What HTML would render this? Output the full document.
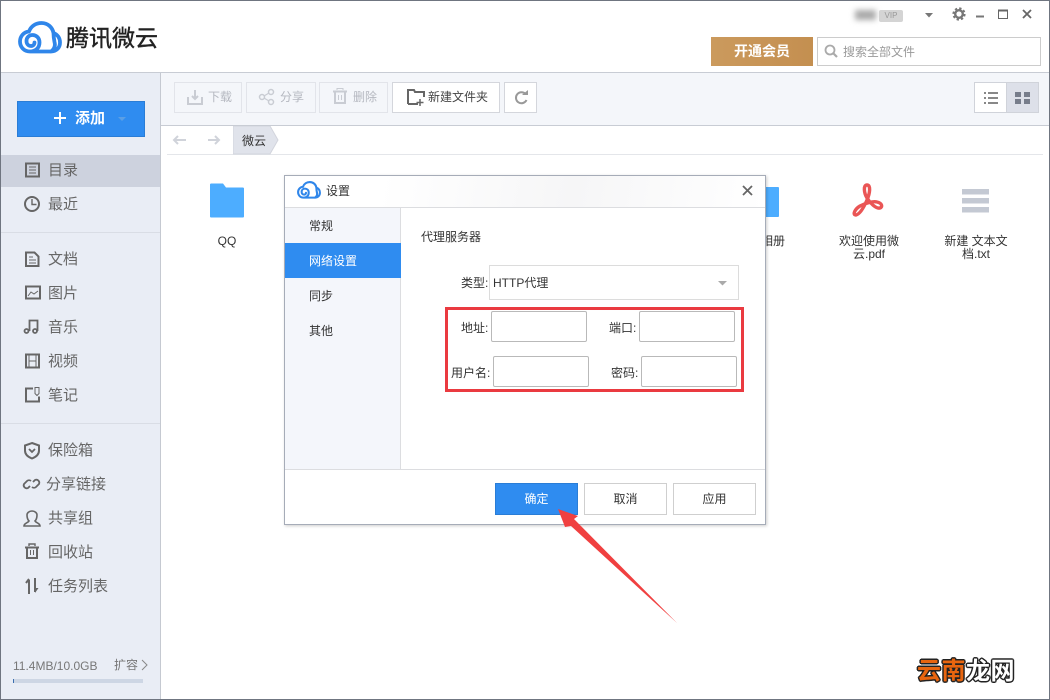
<!DOCTYPE html>
<html lang="zh">
<head>
<meta charset="utf-8">
<title>腾讯微云</title>
<style>
*{box-sizing:border-box;margin:0;padding:0}
html,body{width:1050px;height:700px;overflow:hidden;background:#fff}
body{position:relative;font-family:"Liberation Sans","Noto Sans CJK SC",sans-serif;color:#333}
.a{position:absolute}
.t{position:absolute;white-space:nowrap;line-height:20px;height:20px}
.side{font-size:15px;color:#666}
.tb{position:absolute;top:82px;height:31px;border:1px solid #e2e4ea;background:#f4f6fa}
.tt{font-size:12px;color:#b5b8c0}
.inp{position:absolute;width:96px;height:31px;border:1px solid #b9b9b9;border-radius:2px;background:#fff}
.lab{font-size:12px;color:#333}
.fn{position:absolute;font-size:12px;line-height:13px;color:#333;text-align:center}
.btn{position:absolute;top:483px;width:83px;height:32px;border:1px solid #cfcfcf;background:#fff;font-size:12px;line-height:31px;text-align:center;color:#333}
</style>
</head>
<body>
<!-- header -->
<div class="a" style="left:0;top:72px;width:1050px;height:1px;background:#c8ccd4"></div>
<div class="t" style="left:66px;top:24px;font-size:23px;line-height:28px;height:28px;color:#222;-webkit-text-stroke:.4px #222">腾讯微云</div>

<div class="a" style="left:855px;top:10px;width:21px;height:10px;background:#aaa;filter:blur(3px)"></div>
<div class="t" style="left:879px;top:10px;width:24px;height:12px;line-height:12px;background:#d4d4d4;border-radius:2px;color:#999;font-size:8px;text-align:center">VIP</div>

<div class="a" style="left:711px;top:37px;width:102px;height:29px;background:linear-gradient(90deg,#cb9a5d,#c48f50);color:#fff;font-size:14px;font-weight:bold;line-height:29px;text-align:center">开通会员</div>
<div class="a" style="left:817px;top:37px;width:224px;height:29px;border:1px solid #ccc;background:#fff"></div>
<div class="t" style="left:843px;top:42px;font-size:12px;color:#999">搜索全部文件</div>

<!-- sidebar -->
<div class="a" style="left:1px;top:73px;width:160px;height:626px;background:#e9edf5;border-right:1px solid #c5c9d1"></div>
<div class="a" style="left:1px;top:155px;width:159px;height:32px;background:#cdd2de"></div>
<div class="a" style="left:1px;top:232px;width:159px;height:1px;background:#d9dde5"></div>
<div class="a" style="left:1px;top:423px;width:159px;height:1px;background:#d9dde5"></div>
<div class="a" style="left:17px;top:101px;width:128px;height:36px;background:#2f8cf0;border:1px solid #2a7dd6"></div>
<div class="t" style="left:75px;top:109px;font-size:15px;font-weight:bold;color:#fff">添加</div>

<div class="t side" style="left:48px;top:161px">目录</div>
<div class="t side" style="left:48px;top:195px">最近</div>
<div class="t side" style="left:48px;top:250px">文档</div>
<div class="t side" style="left:48px;top:284px">图片</div>
<div class="t side" style="left:48px;top:318px">音乐</div>
<div class="t side" style="left:48px;top:352px">视频</div>
<div class="t side" style="left:48px;top:386px">笔记</div>
<div class="t side" style="left:48px;top:441px">保险箱</div>
<div class="t side" style="left:46px;top:475px">分享链接</div>
<div class="t side" style="left:48px;top:509px">共享组</div>
<div class="t side" style="left:48px;top:543px">回收站</div>
<div class="t side" style="left:48px;top:577px">任务列表</div>
<div class="t" style="left:13px;top:656px;font-size:12px;color:#777">11.4MB/10.0GB</div>
<div class="t" style="left:114px;top:655px;font-size:12px;color:#777">扩容</div>
<div class="a" style="left:13px;top:679px;width:130px;height:4px;background:#cdd6e4"></div>
<div class="a" style="left:13px;top:679px;width:1px;height:4px;background:#3b6fb0"></div>

<!-- toolbar -->
<div class="a" style="left:161px;top:73px;width:889px;height:53px;background:#f4f6fa;border-bottom:1px solid #c8ccd4"></div>
<div class="tb" style="left:174px;width:68px"></div>
<div class="tb" style="left:246px;width:70px"></div>
<div class="tb" style="left:319px;width:69px"></div>
<div class="tb" style="left:392px;width:108px;background:#fff;border-color:#d4d6dc"></div>
<div class="tb" style="left:504px;width:33px;background:#fff;border-color:#d4d6dc"></div>
<div class="t tt" style="left:208px;top:87px">下载</div>
<div class="t tt" style="left:280px;top:87px">分享</div>
<div class="t tt" style="left:353px;top:87px">删除</div>
<div class="t" style="left:428px;top:87px;font-size:12px;color:#444">新建文件夹</div>
<div class="a" style="left:974px;top:82px;width:33px;height:31px;background:#fff;border:1px solid #d0d3da"></div>
<div class="a" style="left:1006px;top:82px;width:33px;height:31px;background:#dde0e9;border:1px solid #d0d3da"></div>

<!-- breadcrumb -->
<div class="a" style="left:167px;top:154px;width:876px;height:1px;background:#e4e6ea"></div>
<svg class="a" style="left:233px;top:126px" width="46" height="29"><path d="M0 0H37L45 14 37 28H0Z" fill="#e0e3eb" stroke="#d2d5dd"/></svg>
<div class="t" style="left:242px;top:131px;font-size:12px;color:#333">微云</div>

<!-- files -->
<div class="fn" style="left:197px;top:235px;width:60px">QQ</div>
<div class="fn" style="left:758px;top:235px;width:30px">相册</div>
<div class="fn" style="left:835px;top:235px;width:68px">欢迎使用微<br>云.pdf</div>
<div class="fn" style="left:940px;top:235px;width:72px">新建 文本文<br>档.txt</div>

<!-- all icons on the base layer -->
<svg class="a" style="left:0;top:0" width="1050" height="700" viewBox="0 0 1050 700">
 <defs>
  <symbol id="cloud" viewBox="0 0 44 33">
   <path d="M12 30.500C6 30.500 2 26 2 20.500 2 15 6 11 11 10.500 13 5 18 2 23.500 2 30 2 34.500 6.500 35.500 12 39.500 13.500 42 17 42 21.500 42 27 38 30.500 33 30.500ZM33 30.500C36.500 28 37.500 24.500 36.500 21 36 18.500 35.500 15 35.500 12M12 30.500C18 30.500 21.500 26.500 21.500 21.500 21.500 16.500 18 14 14.500 14 11 14 8.500 16.500 8.500 20 8.500 23 10.500 25 13 25 15 25 16.500 23.500 16.500 21.500" fill="none" stroke="#2f86ea" stroke-width="3.800" stroke-linejoin="round" stroke-linecap="round"/>
  </symbol>
 </defs>
 <use href="#cloud" x="18" y="21" width="44" height="33"/>

 <!-- window frame -->
 <rect x=".5" y=".5" width="1049" height="699" fill="none" stroke="#6f7580"/>

 <!-- window controls -->
 <path d="M925 13h8l-4 4.500z" fill="#777"/>
 <circle cx="959" cy="14" r="3.800" fill="none" stroke="#777" stroke-width="2.400"/>
 <circle cx="959" cy="14" r="5.500" fill="none" stroke="#777" stroke-width="2.200" stroke-dasharray="2.300 2.020"/>
 <path d="M976 16.500h8" stroke="#777" stroke-width="2"/>
 <path d="M998.500 10.500h9v8h-9z" fill="none" stroke="#666" stroke-width="1"/><path d="M998 10.500h10" stroke="#666" stroke-width="2"/>
 <path d="M1023 10l8 8M1031 10l-8 8" stroke="#666" stroke-width="1.800"/>
 <circle cx="830" cy="50" r="4.500" fill="none" stroke="#aaa" stroke-width="1.800"/><path d="M833.500 53.500l3.500 3.500" stroke="#aaa" stroke-width="2.200"/>

 <!-- add button -->
 <path d="M60 112v12M54 118h12" stroke="#fff" stroke-width="2"/>
 <path d="M118 117h8l-4 4z" fill="#5a9fe6"/>

 <!-- sidebar icons -->
 <g fill="none" stroke="#666" stroke-width="2">
  <rect x="26" y="163.500" width="13" height="13"/>
  <path d="M29 167h7M29 170h7M29 173h7" stroke-width="1"/>
  <circle cx="32" cy="204" r="7"/><path d="M32 199v5.500h4.500" stroke-width="1.400"/>
  <path d="M26 252.500h8.500l4 4v9.500H26z"/><path d="M29 257h4M29 260h7M29 263h7" stroke-width="1"/>
  <rect x="26" y="286.500" width="14" height="12"/><path d="M28 296l3-4 3 2 4-3" stroke-width="1"/>
  <path d="M29.500 331v-10.500h8V331" stroke-width="1.800"/>
  <circle cx="26.500" cy="331" r="2" stroke-width="1.800"/><circle cx="35" cy="331" r="2" stroke-width="1.800"/>
  <rect x="26" y="354.500" width="13" height="13"/><path d="M29 355v13M36 355v13M29 361h7" stroke-width="1"/>
  <path d="M33 388.500h-7v13h13v-5" stroke-width="2"/><path d="M35 387.500h4v6l-2 2-2-2z" stroke-width="1"/>
  <path d="M32 443l7 2.500v5c0 4-3 6.500-7 8-4-1.500-7-4-7-8v-5z"/><path d="M29 449l3 3 3-3" stroke-width="1.800"/>
  <path d="M30 486l-2 2a3 3 0 0 1-4-4l3-3a3 3 0 0 1 4 0M33 482l2-2a3 3 0 0 1 4 4l-3 3a3 3 0 0 1-4 0" stroke-width="1.800"/>
  <path d="M24 526h16c0-3-4-3-5-5 2-2 2-4 2-6 0-2-2-4-5-4s-5 2-5 4c0 2 0 4 2 6-1 2-5 2-5 5z" stroke-width="1.600"/>
  <path d="M25 547.500h14" stroke-width="2"/><path d="M29 546v-2h6v2" stroke-width="1.400"/><path d="M27 548v10h10v-10" stroke-width="2"/><path d="M30.500 550v5M33.500 550v5" stroke-width="1"/>
  <path d="M29 594v-14M26 583l3-4" stroke-width="2"/><path d="M35 578v14" stroke-width="2"/>
  <path d="M142 660l5 5-5 5" stroke="#888" stroke-width="1"/>
 </g>
 <path d="M35 588h3.500l-3.500 5z" fill="#666"/>

 <!-- toolbar icons -->
 <g fill="none" stroke="#c9ccd3" stroke-width="2">
  <path d="M188 97v7h14v-7"/><path d="M195 90v9M192 96l3 3 3-3"/>
  <circle cx="262" cy="97" r="2.500" stroke-width="1.500"/><circle cx="271" cy="92" r="2.500" stroke-width="1.500"/><circle cx="271" cy="102" r="2.500" stroke-width="1.500"/><path d="M264 96l5-3M264 98l5 3" stroke-width="1.200"/>
  <path d="M333 91.500h14"/><path d="M337 90v-1.500h6V90" stroke-width="1"/><path d="M335 92v11h10V92"/><path d="M338.500 95v5M341.500 95v5" stroke-width="1"/>
  <path d="M186 140h-12M178 136l-4 4 4 4" stroke="#d0d3da"/>
  <path d="M208 140h11M215 136l4 4-4 4" stroke="#d0d3da"/>
 </g>
 <path d="M408 104V90h6l1 2h9v5M418 104h-10" fill="none" stroke="#666" stroke-width="2"/>
 <path d="M420 99v7M416.500 102.500h7" stroke="#666" stroke-width="1.500"/>
 <path d="M525.500 94a5.500 5.500 0 1 0 1 6" fill="none" stroke="#999" stroke-width="2"/>
 <path d="M522 95h6v-5z" fill="#999"/>
 <path d="M984 93h2M984 98h2M984 103h2" stroke="#888" stroke-width="2"/><path d="M988 93h10M988 98h10M988 103h10" stroke="#888" stroke-width="2"/>
 <path d="M1015 92h6v5h-6zM1024 92h6v5h-6zM1015 99h6v5h-6zM1024 99h6v5h-6z" fill="#777d8b"/>

 <!-- file icons -->
 <path d="M211 183.500h12l3 4h17c.5 0 1 .5 1 1v28c0 .5-.500 1-1 1h-32c-.5 0-1-.5-1-1v-32c0-.5.500-1 1-1z" fill="#4dadff"/>
 <rect x="745" y="187" width="34" height="30" rx="1" fill="#4dadff"/>
 <path d="M867 185C871 185 870 193 867 200 864 207 860 214 856 215 852 215 855 209 860 206 866 203 873 201 877 202 882 203 883 207 880 208 876 209 870 203 867 198 864 193 863 185 867 185Z" fill="none" stroke="#ea5555" stroke-width="3.400" stroke-linejoin="round"/>
 <path d="M962 189h27v5.500h-27zM962 198h27v5.500h-27zM962 207h27v5.500h-27z" fill="#c4c9d3"/>
</svg>

<!-- dialog -->
<div class="a" style="left:284px;top:175px;width:482px;height:350px;background:#fff;border:1px solid #a6acb8;box-shadow:1px 1px 3px rgba(0,0,0,.2)"></div>
<div class="a" style="left:285px;top:176px;width:480px;height:32px;background:linear-gradient(100deg,#fff 20%,#f6f6f7 60%,#fff 100%);border-bottom:1px solid #dcdde0"></div>
<div class="a" style="left:285px;top:208px;width:116px;height:261px;background:#f4f6fb;border-right:1px solid #dcdde0"></div>
<div class="a" style="left:285px;top:243px;width:116px;height:35px;background:#2f8cf0"></div>
<div class="a" style="left:285px;top:469px;width:480px;height:1px;background:#dcdde0"></div>
<div class="t" style="left:326px;top:181px;font-size:12px;color:#333">设置</div>
<div class="t" style="left:309px;top:216px;font-size:12px;color:#333">常规</div>
<div class="t" style="left:309px;top:251px;font-size:12px;color:#fff">网络设置</div>
<div class="t" style="left:309px;top:286px;font-size:12px;color:#333">同步</div>
<div class="t" style="left:309px;top:321px;font-size:12px;color:#333">其他</div>
<div class="t" style="left:421px;top:227px;font-size:12px;color:#333">代理服务器</div>
<div class="t lab" style="left:461px;top:273px">类型:</div>
<div class="a" style="left:489px;top:265px;width:250px;height:35px;border:1px solid #dcdcdc;background:#fff"></div>
<div class="t" style="left:493px;top:273px;font-size:12px;color:#333">HTTP代理</div>
<div class="t lab" style="left:461px;top:318px">地址:</div>
<div class="t lab" style="left:609px;top:318px">端口:</div>
<div class="t lab" style="left:451px;top:363px">用户名:</div>
<div class="t lab" style="left:611px;top:363px">密码:</div>
<div class="inp" style="left:491px;top:311px"></div>
<div class="inp" style="left:639px;top:311px"></div>
<div class="inp" style="left:493px;top:356px"></div>
<div class="inp" style="left:641px;top:356px"></div>
<div class="a" style="left:445px;top:307px;width:299px;height:85px;border:3px solid #ea3a40"></div>
<div class="btn" style="left:495px;background:#2f8cf0;border-color:#2a7dd6;color:#fff">确定</div>
<div class="btn" style="left:584px">取消</div>
<div class="btn" style="left:673px">应用</div>

<svg class="a" style="left:0;top:0" width="1050" height="700" viewBox="0 0 1050 700">
 <use href="#cloud" x="297" y="181" width="24" height="18"/>
 <path d="M743 186l9 9M752 186l-9 9" stroke="#666" stroke-width="1.800"/>
 <path d="M718 281h9l-4.500 4.500z" fill="#aaa"/>
 <path d="M558 509L578 516 574 519 677 623 571 526 565 527Z" fill="#f04040"/>
</svg>

<!-- watermark -->
<div class="t" style="left:917px;top:657px;height:30px;line-height:30px;font-size:24px;letter-spacing:.5px;font-weight:bold;text-shadow:-1.500px 0 0 #222,1.500px 0 0 #222,0 -1.500px 0 #222,0 1.500px 0 #222,-1px -1px 0 #222,1px -1px 0 #222,-1px 1px 0 #222,1px 1px 0 #222"><span style="color:#e8650f">云南</span><span style="color:#fff">龙网</span></div>
</body>
</html>
